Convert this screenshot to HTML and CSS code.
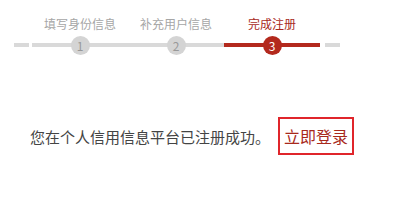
FILE: index.html
```html
<!DOCTYPE html>
<html lang="zh-CN">
<head>
    <meta charset="UTF-8">
    <title>注册成功</title>
    <link rel="stylesheet" href="styles.css">
</head>
<body>

    <!-- Steps -->
    <div class="steps">
        <div class="dash dash-lead"></div>
        <div class="step">
            <div class="step-label">填写身份信息</div>
            <div class="step-line"><span class="step-num">1</span></div>
        </div>
        <div class="step">
            <div class="step-label">补充用户信息</div>
            <div class="step-line"><span class="step-num">2</span></div>
        </div>
        <div class="step active">
            <div class="step-label">完成注册</div>
            <div class="step-line"><span class="step-num">3</span></div>
        </div>
        <div class="dash dash-tail"></div>
    </div>

    <!-- Result -->
    <div class="result">
        <span class="result-text">您在个人信用信息平台已注册成功。</span>
        <a class="login-btn" href="#">立即登录</a>
    </div>

</body>
</html>
```

FILE: styles.css
```css
body {
    font-family: "Noto Sans CJK SC", "Microsoft YaHei", sans-serif;
    background: #fff;
    color: #444;
    margin: 0;
    padding: 0;
}

/* Steps */
.steps {
    display: flex;
    align-items: flex-end;
    padding: 16px 0 0 14px;
}

.dash {
    width: 15px;
    height: 4px;
    background: #d9d9d9;
    margin-bottom: 7px;
}

.dash-lead {
    margin-right: 3px;
}

.dash-tail {
    margin-left: 5px;
}

.step {
    width: 96px;
    display: flex;
    flex-direction: column;
    align-items: center;
}

.step-label {
    font-size: 12px;
    line-height: 16px;
    color: #a6a6a6;
    margin-bottom: 4px;
}

.step-line {
    width: 100%;
    height: 18px;
    display: flex;
    align-items: center;
    justify-content: center;
    background: linear-gradient(#d9d9d9, #d9d9d9) center / 100% 4px no-repeat;
}

.step-num {
    width: 19px;
    height: 19px;
    border-radius: 50%;
    background: #d4d4d4;
    color: #999;
    font-size: 12px;
    line-height: 19px;
    text-align: center;
}

.step.active .step-label {
    color: #a8291c;
}

.step.active .step-line {
    background: linear-gradient(#b3291d, #b3291d) center / 100% 4px no-repeat;
}

.step.active .step-num {
    background: #b3291d;
    color: #fff;
}

/* Result */
.result {
    display: flex;
    align-items: center;
    padding-left: 30px;
    margin-top: 63px;
}

.result-text {
    font-size: 15px;
}

.login-btn {
    margin-left: 8px;
    border: 2px solid #e0252b;
    padding: 0 4px;
    height: 34px;
    line-height: 34px;
    font-size: 16px;
    color: #a8291c;
    text-decoration: none;
}
```
